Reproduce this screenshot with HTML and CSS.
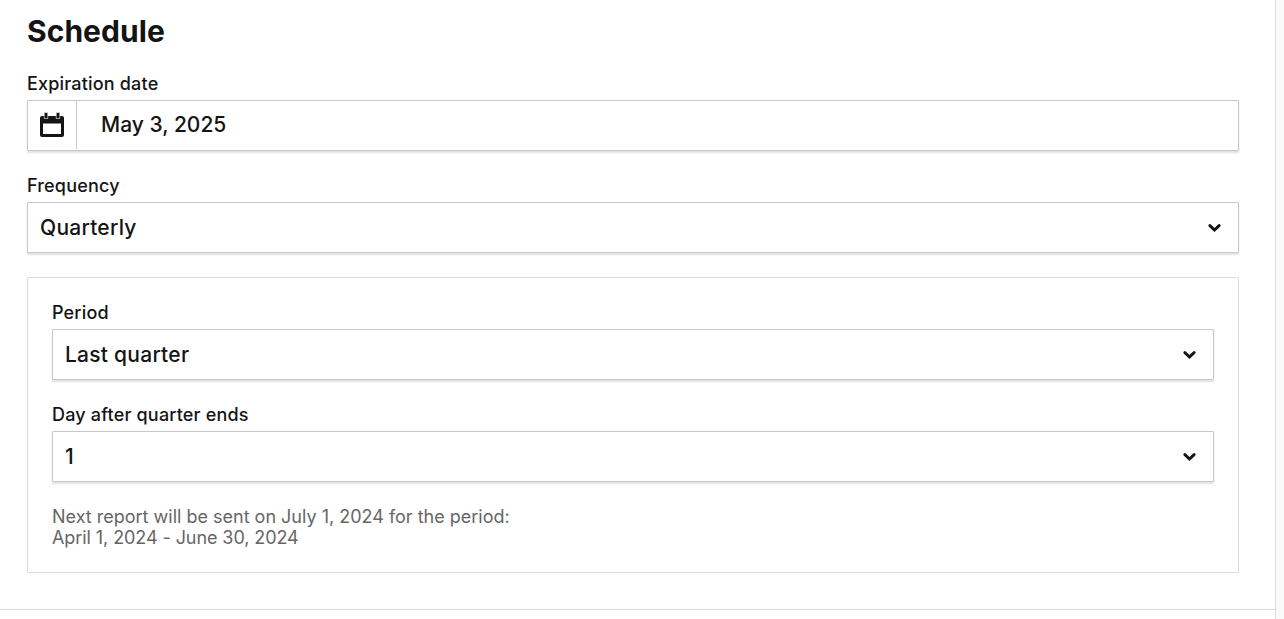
FILE: index.html
```html
<!DOCTYPE html>
<html lang="en">
<head>
    <meta charset="UTF-8">
    <meta name="viewport" content="width=device-width, initial-scale=1.0">
    <title>Schedule</title>
    <link rel="stylesheet" href="styles.css">
</head>
<body>
    <main class="page">
        <section class="schedule">
            <h2 class="title">Schedule</h2>

            <div class="field">
                <div class="label">Expiration date</div>
                <div class="control date">
                    <span class="date-icon">
                        <svg width="24" height="24" viewBox="0 0 24 24">
                            <path fill="#141414" fill-rule="evenodd" d="M2 3h20a2 2 0 0 1 2 2v17a2 2 0 0 1-2 2H2a2 2 0 0 1-2-2V5a2 2 0 0 1 2-2zM3 10.500V21h18V10.500z"/>
                            <path fill="#141414" stroke="#fff" stroke-width=".6" d="M4.200-.5h3.600v6H4.200zM16.200-.5h3.600v6h-3.600z"/>
                        </svg>
                    </span>
                    <span class="date-value">May 3, 2025</span>
                </div>
            </div>

            <div class="field">
                <div class="label">Frequency</div>
                <button class="control select" type="button">
                    <span>Quarterly</span>
                    <svg class="chevron" width="13" height="9" viewBox="0 0 13 9"><path d="M1.900 2.600l4.600 4.400 4.600-4.400"/></svg>
                </button>
            </div>

            <div class="panel">
                <div class="field">
                    <div class="label">Period</div>
                    <button class="control select" type="button">
                        <span>Last quarter</span>
                        <svg class="chevron" width="13" height="9" viewBox="0 0 13 9"><path d="M1.900 2.600l4.600 4.400 4.600-4.400"/></svg>
                    </button>
                </div>

                <div class="field">
                    <div class="label">Day after quarter ends</div>
                    <button class="control select" type="button">
                        <span>1</span>
                        <svg class="chevron" width="13" height="9" viewBox="0 0 13 9"><path d="M1.900 2.600l4.600 4.400 4.600-4.400"/></svg>
                    </button>
                </div>

                <p class="note">Next report will be sent on July 1, 2024 for the period:<br><span class="range">April 1, 2024 - June 30, 2024</span></p>
            </div>
        </section>
    </main>
</body>
</html>
```

FILE: styles.css
```css
* {
    box-sizing: border-box;
}
body {
    margin: 0;
    height: 100vh;
    overflow: hidden;
    background-color: #f9f9f9;
    color: #141414;
    font-family: Inter, "Liberation Sans", sans-serif;
}
.page {
    width: 1276px;
    height: 100%;
    background-color: #fff;
    border-right: 1px solid #dcdcdc;
}
.schedule {
    height: 610px;
    padding: 13px 36px 0 27px;
    border-bottom: 1px solid #dcdcdc;
}
.title {
    margin: 0 0 24px;
    font-size: 30px;
    line-height: 36px;
    font-weight: 700;
    letter-spacing: 0.05px;
}
.field {
    margin-bottom: 24px;
}
.label {
    margin-bottom: 6px;
    font-size: 18px;
    line-height: 21px;
    font-weight: 500;
    letter-spacing: 0.18px;
}
.control {
    display: flex;
    align-items: center;
    width: 100%;
    height: 51px;
    background-color: #fff;
    border: 1px solid #c8c8c8;
    border-radius: 1px;
    box-shadow: 0 2px 2px rgba(0, 0, 0, 0.12);
    color: #141414;
    font-family: inherit;
    font-size: 21px;
    font-weight: 500;
    letter-spacing: 0.25px;
}
.date-icon {
    display: flex;
    align-self: flex-start;
    align-items: center;
    justify-content: center;
    width: 49px;
    height: 48px;
    border-right: 1px solid #c8c8c8;
}
.date-icon svg {
    overflow: visible;
}
.date-value {
    padding: 0 0 2px 24px;
    letter-spacing: 0;
}
.select {
    justify-content: space-between;
    padding: 0 17px 0 12px;
}
.chevron {
    fill: none;
    stroke: #141414;
    stroke-width: 2.9;
    stroke-linecap: round;
}
.panel {
    padding: 24px;
    border: 1px solid #dcdcdc;
    border-radius: 1px;
}
.note {
    margin: 0;
    color: #666;
    font-size: 18px;
    line-height: 21px;
}
.range {
    letter-spacing: -0.08px;
}
```
